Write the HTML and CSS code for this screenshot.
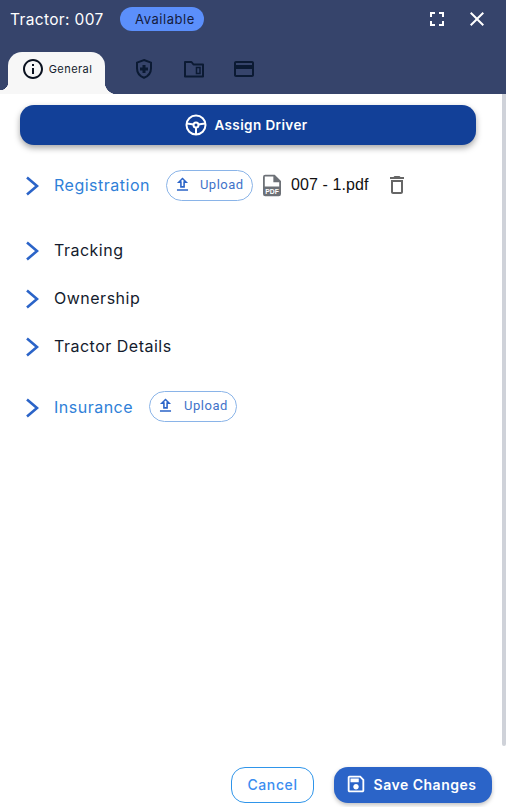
FILE: index.html
```html
<!DOCTYPE html>
<html lang="en">
<head>
    <meta charset="UTF-8">
    <title>Tractor: 007</title>
    <link rel="stylesheet" href="styles.css">
</head>
<body>
    <div class="panel">
        <header class="top">
            <div class="title-row">
                <div class="title">Tractor: 007</div>
                <div class="status">Available</div>
                <div class="window-actions">
                    <svg class="icon-24" viewBox="0 0 24 24"><path fill="#fff" d="M7 14H5v5h5v-2H7v-3zm-2-4h2V7h3V5H5v5zm12 7h-3v2h5v-5h-2v3zM14 5v2h3v3h2V5h-5z"/></svg>
                    <svg class="icon-24" viewBox="0 0 24 24"><path fill="#fff" d="M19 6.41 17.59 5 12 10.59 6.41 5 5 6.41 10.59 12 5 17.59 6.41 19 12 13.41 17.59 19 19 17.59 13.41 12z"/></svg>
                </div>
            </div>
            <nav class="tabs">
                <div class="tab tab-active">
                    <svg class="icon-24" viewBox="0 0 24 24"><path fill="#0b1220" d="M11 7h2v2h-2zm0 4h2v6h-2zm1-9C6.48 2 2 6.48 2 12s4.48 10 10 10 10-4.48 10-10S17.52 2 12 2zm0 18c-4.41 0-8-3.59-8-8s3.59-8 8-8 8 3.59 8 8-3.59 8-8 8z"/></svg>
                    <span>General</span>
                </div>
                <div class="tab">
                    <svg class="icon-24" viewBox="0 0 24 24"><path fill="none" stroke="#0b1a33" stroke-width="2" d="M12 3l7 2.6v5.6c0 4.4-3 8-7 9.600-4-1.600-7-5.200-7-9.600V5.600z"/><path fill="#0b1a33" d="M10.500 8h3v2.500H16v3h-2.500V16h-3v-2.500H8v-3h2.500z"/></svg>
                </div>
                <div class="tab">
                    <svg class="icon-24" viewBox="0 0 24 24"><path fill="none" stroke="#0b1a33" stroke-width="2" stroke-linejoin="round" d="M3 5h6.500l2 2.500H21v12H3z"/><path fill="none" stroke="#0b1a33" stroke-width="1.500" d="M14.500 10.500h3.500v6h-3.500z"/></svg>
                </div>
                <div class="tab">
                    <svg class="icon-24" viewBox="0 0 24 24"><path fill="#0b1a33" d="M20 4H4c-1.110 0-1.990.89-1.990 2L2 18c0 1.110.89 2 2 2h16c1.110 0 2-.89 2-2V6c0-1.110-.89-2-2-2zm0 14H4v-6h16v6zm0-10H4V6h16v2z"/></svg>
                </div>
            </nav>
        </header>

        <main class="content">
            <button class="assign-button">
                <svg class="icon-24" viewBox="0 0 24 24"><g fill="none" stroke="#fff" stroke-width="2"><circle cx="12" cy="12" r="9.500"/><circle cx="12" cy="12" r="2.500"/><path d="M3 10.500l6.800 1M21 10.500l-6.800 1M12 14.500V21"/></g></svg>
                Assign Driver
            </button>

            <div class="section section-registration">
                <svg class="chevron" viewBox="0 0 14 22"><path d="M2 3.500l10 8.500-10 8.500"/></svg>
                <span class="section-name section-link">Registration</span>
                <button class="upload">
                    <svg viewBox="0 0 24 24"><path d="M9 16h6v-6h4l-7-7-7 7h4v6zm3-10.170L14.170 8H13v6h-2V8H9.830L12 5.830zM5 18h14v2H5z"/></svg>
                    Upload
                </button>
                <svg class="file-icon" viewBox="0 0 20 24"><path fill="#6d7177" d="M2.500 0H13l7 7v14.500a2.500 2.500 0 0 1-2.500 2.500h-15A2.500 2.500 0 0 1 0 21.500v-19A2.500 2.500 0 0 1 2.500 0z"/><path fill="#fff" d="M2 2h9.500v6.500H18V13H2z"/><text x="10" y="21" font-size="7.500" font-family="Liberation Sans" font-weight="700" text-anchor="middle" fill="#fff">PDF</text></svg>
                <span class="file-name">007 - 1.pdf</span>
                <svg class="icon-24 trash" viewBox="0 0 24 24"><path fill="#666" d="M6 19c0 1.100.9 2 2 2h8c1.100 0 2-.9 2-2V7H6v12zM8 9h8v10H8V9zm7.500-5-1-1h-5l-1 1H5v2h14V4z"/></svg>
            </div>

            <div class="section section-plain">
                <svg class="chevron" viewBox="0 0 14 22"><path d="M2 3.500l10 8.500-10 8.500"/></svg>
                <span class="section-name">Tracking</span>
            </div>
            <div class="section section-plain">
                <svg class="chevron" viewBox="0 0 14 22"><path d="M2 3.500l10 8.500-10 8.500"/></svg>
                <span class="section-name">Ownership</span>
            </div>
            <div class="section section-plain">
                <svg class="chevron" viewBox="0 0 14 22"><path d="M2 3.500l10 8.500-10 8.500"/></svg>
                <span class="section-name">Tractor Details</span>
            </div>

            <div class="section section-insurance">
                <svg class="chevron" viewBox="0 0 14 22"><path d="M2 3.500l10 8.500-10 8.500"/></svg>
                <span class="section-name section-link">Insurance</span>
                <button class="upload">
                    <svg viewBox="0 0 24 24"><path d="M9 16h6v-6h4l-7-7-7 7h4v6zm3-10.170L14.170 8H13v6h-2V8H9.830L12 5.830zM5 18h14v2H5z"/></svg>
                    Upload
                </button>
            </div>
        </main>

        <footer class="actions">
            <button class="cancel">Cancel</button>
            <button class="save">
                <svg class="icon-22" viewBox="0 0 24 24"><path fill="#fff" d="M17 3H5c-1.110 0-2 .9-2 2v14c0 1.100.89 2 2 2h14c1.100 0 2-.9 2-2V7l-4-4zm2 16H5V5h11.170L19 7.830V19zm-7-7c-1.660 0-3 1.340-3 3s1.340 3 3 3 3-1.340 3-3-1.340-3-3-3zM6 6h9v4H6z"/></svg>
                Save Changes
            </button>
        </footer>

        <div class="scroll-thumb"></div>
    </div>
</body>
</html>
```

FILE: styles.css
```css
:root {
    --navy: #36446b;
    --tab-bg: #f7f7f7;
    --blue: #2b64c8;
    --link: #2f80d8;
    --dark: #141b2d;
}

* {
    box-sizing: border-box;
}

body {
    margin: 0;
    font-family: 'Inter', 'Open Sans', sans-serif;
    color: var(--dark);
    background: white;
}

button {
    font-family: inherit;
    cursor: pointer;
}

svg {
    display: block;
    flex-shrink: 0;
}

.icon-24 { width: 24px; height: 24px; }
.icon-22 { width: 22px; height: 22px; }

.panel {
    position: relative;
    height: 807px;
    display: flex;
    flex-direction: column;
    overflow: hidden;
}

/* Header */
.top {
    height: 94px;
    background: var(--navy);
    display: flex;
    flex-direction: column;
    justify-content: space-between;
}

.title-row {
    display: flex;
    align-items: center;
    padding: 7px 17px 0 10px;
}

.title {
    color: white;
    font-size: 15.5px;
    letter-spacing: 0.35px;
    width: 110px;
}

.status {
    background: #5b8ffb;
    color: #141b3d;
    font-size: 13px;
    letter-spacing: 0.55px;
    height: 24px;
    line-height: 24px;
    width: 84px;
    padding-left: 15px;
    border-radius: 12px;
}

.window-actions {
    margin-left: auto;
    display: flex;
    gap: 16px;
}

.tabs {
    display: flex;
    padding-left: 8px;
    height: 42px;
}

.tab {
    width: 50px;
    display: flex;
    align-items: center;
    justify-content: center;
    padding-bottom: 8px;
}

.tab-active {
    position: relative;
    width: 97px;
    margin-right: 14px;
    gap: 4px;
    padding: 0 0 8px 0;
    background: var(--tab-bg);
    border-radius: 14px 14px 0 0;
    font-size: 11px;
    letter-spacing: 0.45px;
}

.tab-active:before,
.tab-active:after {
    content: "";
    position: absolute;
    bottom: 0;
    width: 12px;
    height: 12px;
}

.tab-active:before {
    left: -8px;
    width: 8px;
    background: radial-gradient(circle at 0 0, var(--navy) 8px, var(--tab-bg) 8.500px);
}

.tab-active:after {
    right: -12px;
    background: radial-gradient(circle at 100% 0, var(--navy) 12px, var(--tab-bg) 12.500px);
}

/* Main */
.content {
    flex-grow: 1;
    padding: 11px 30px 0 20px;
}

.assign-button {
    width: 456px;
    height: 40px;
    padding: 0 4px 0 0;
    background: #124098;
    color: white;
    border: none;
    border-radius: 14px;
    box-shadow: 0 3px 6px rgba(0, 0, 0, 0.35);
    font-size: 13.5px;
    font-weight: 600;
    letter-spacing: 0.4px;
    display: flex;
    align-items: center;
    justify-content: center;
    gap: 6px;
}

.section {
    display: flex;
    align-items: center;
    height: 48px;
    padding-left: 5px;
}

.section-registration {
    margin-top: 16px;
    margin-bottom: 17px;
}

.section-insurance {
    margin-top: 13px;
}

.chevron {
    width: 14px;
    height: 22px;
    margin-right: 15px;
    fill: none;
    stroke: var(--blue);
    stroke-width: 2.600;
}

.section-name {
    font-size: 16px;
    letter-spacing: 0.5px;
    color: var(--dark);
}

.section-link {
    color: var(--link);
}

.upload {
    display: flex;
    align-items: center;
    gap: 8px;
    width: 87px;
    height: 31px;
    padding: 0 0 1px 6px;
    margin-left: 16px;
    background: white;
    border: 1px solid #8ab4e8;
    border-radius: 16px;
    color: #3f73c9;
    font-family: 'Roboto', sans-serif;
    font-size: 13px;
    letter-spacing: 0.5px;
}

.section-insurance .upload {
    width: 88px;
    gap: 9px;
    margin-bottom: 2px;
}

.upload svg {
    width: 19px;
    height: 19px;
    fill: var(--blue);
}

.file-icon {
    width: 18px;
    height: 23px;
    margin-left: 10px;
}

.file-name {
    font-family: 'Liberation Sans', sans-serif;
    font-size: 16px;
    letter-spacing: 0.1px;
    color: #111;
    margin-left: 10px;
}

.trash {
    margin-left: 16px;
}

/* Footer */
.actions {
    display: flex;
    justify-content: flex-end;
    gap: 20px;
    padding: 0 14px 4px 0;
}

.cancel {
    width: 83px;
    height: 36px;
    padding: 0 0 2px 0;
    background: white;
    border: 1px solid #2f95ea;
    border-radius: 14px;
    color: #3b8df0;
    font-size: 14px;
    font-weight: 500;
    letter-spacing: 0.6px;
}

.save {
    width: 158px;
    height: 36px;
    padding: 0 5px 2px 0;
    background: var(--blue);
    border: none;
    border-radius: 14px;
    color: white;
    font-size: 14px;
    font-weight: 600;
    letter-spacing: 0.5px;
    display: flex;
    align-items: center;
    justify-content: center;
    gap: 7px;
    box-shadow: 0 2px 4px rgba(0, 0, 0, 0.25);
}

.scroll-thumb {
    position: absolute;
    top: 94px;
    right: 0;
    width: 4px;
    height: 652px;
    background: #cfd2d9;
    border-radius: 0 0 2px 2px;
}
```
